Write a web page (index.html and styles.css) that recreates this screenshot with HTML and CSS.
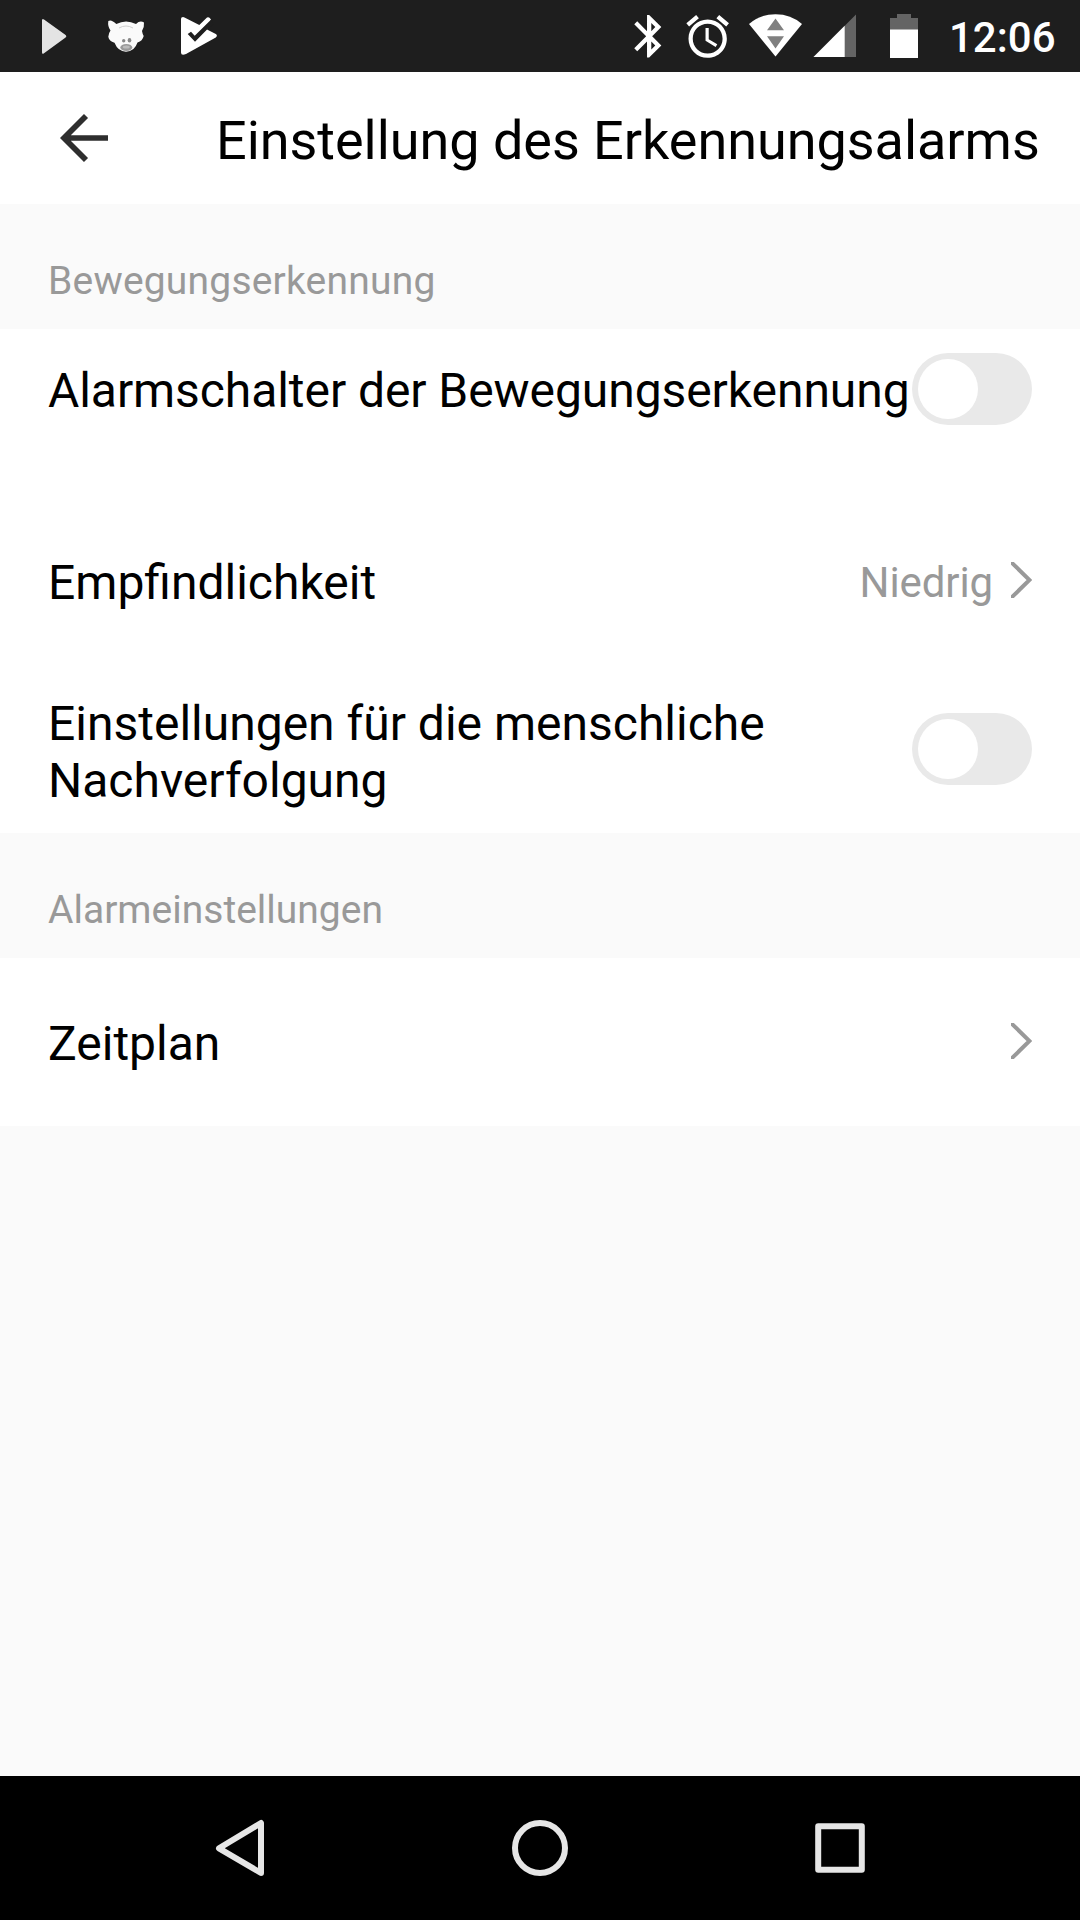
FILE: index.html
```html
<!DOCTYPE html>
<html lang="de">
    <head>
    <meta charset="UTF-8">
    <title>Einstellung des Erkennungsalarms</title>
        <link rel="stylesheet" href="styles.css">
    </head>
        <body>
            <div class="status">
                <div class="status_left">
                    <svg width="48" height="72" viewBox="0 0 48 72">
                        <path d="M12 20.5q0-2.5 2-1L35.6 35q1.6 1.3 0 2.600L14 53.300q-2 1.500-2-1z" fill="#e4e4e4"/>
                    </svg>
                    <svg width="48" height="72" viewBox="0 0 48 72">
                        <path d="M6.300 21q3-2 8 3 9.700-5 19.700 0 4-4 8-1.500.5 4-2 8.500.5 3 1.700 5-1.200 5-6.200 6.500-3 9-11.500 9.200-8-.2-11.500-9-5.500-1.700-6.200-6 .5-4 2.200-6.200-3-4-2.200-9.500z" fill="#fafafa"/>
                        <path d="M17 28q7-4 14 0" fill="none" stroke="#cfcfcf"/>
                        <ellipse cx="24.300" cy="47.500" rx="6" ry="3.500" fill="#999"/>
                        <ellipse cx="24.300" cy="47" rx="3.500" ry="1.500" fill="#bbb"/>
                        <circle cx="21.700" cy="40.700" r="1.700" fill="#888"/>
                        <ellipse cx="27.500" cy="40.200" rx="1.800" ry="2.300" fill="#888"/>
                    </svg>
                    <svg width="48" height="72" viewBox="0 0 48 72">
                        <path d="M7 19q0-2 2-2 .8 0 1.500.4L25.300 25l7.700-7.400q1.300-1 2.500.2l1.500 1.700-4 10 8.800 4.500q2.200 1.700 0 3.400L12 54q-5 2-5-1.500z" fill="#fff"/>
                        <path d="M13.700 34l3.300-2.300 3.700 4L37.700 19l2 5-6.400 5.200L21 41.700z" fill="#1e1e1e"/>
                    </svg>
                </div>
                <div class="status_right">
                    <svg width="60" height="72" viewBox="0 0 60 72">
                        <path transform="translate(-.4 10.700) scale(2.130)" fill="#fff" d="M17.710 7.710L12 2h-1v7.590L6.410 5 5 6.410 10.590 12 5 17.590 6.410 19 11 14.410V22h1l5.710-5.710-4.300-4.290 4.300-4.290zM13 5.830l1.880 1.880L13 9.590V5.830zm1.880 10.460L13 18.170v-3.760l1.880 1.880z"/>
                    </svg>
                    <svg width="60" height="72" viewBox="0 0 60 72">
                        <path transform="translate(-1.900 11) scale(2.130)" fill="#fff" d="M22 5.720l-4.600-3.860-1.290 1.530 4.600 3.860L22 5.720zM7.880 3.390L6.600 1.860 2 5.710l1.290 1.530 4.590-3.850zM12.500 8H11v6l4.750 2.850.75-1.230-4-2.370V8zM12 4c-4.970 0-9 4.030-9 9s4.020 9 9 9c4.970 0 9-4.030 9-9s-4.030-9-9-9zm0 16c-3.870 0-7-3.130-7-7s3.130-7 7-7 7 3.130 7 7-3.130 7-7 7z"/>
                    </svg>
                    <svg width="64" height="72" viewBox="0 0 64 72">
                        <path d="M5 24Q16 14.200 31.500 14.200T58 24L31.500 56.500z" fill="#fff"/>
                        <path d="M31.500 18.500L40 30.200H23zM23 36.300h17L31.500 48.500z" fill="#808080"/>
                    </svg>
                    <svg width="60" height="72" viewBox="0 0 60 72">
                        <path d="M5.500 57L48 14.500V57z" fill="#646464"/>
                        <path d="M5.500 57L36.700 25.800V57z" fill="#fff"/>
                    </svg>
                    <svg width="68" height="72" viewBox="0 0 68 72">
                        <path d="M22 18h7v-4h14v4h7v12H22z" fill="#646464"/>
                        <path d="M22 29.500h28V58H22z" fill="#fff"/>
                    </svg>
                    <span class="clock">12:06</span>
                </div>
            </div>

            <div class="header">
                <svg class="back" width="48" height="48" viewBox="0 0 48 48">
                    <path d="M48 24H5M26 2L4 24l22 22" fill="none" stroke="#2e2e2e" stroke-width="5.700"/>
                </svg>
                <h1 class="title">Einstellung des Erkennungsalarms</h1>
            </div>

            <div class="content">
                <h2 class="section section_motion">Bewegungserkennung</h2>
                <div class="row row_top">
                    <span class="label">Alarmschalter der Bewegungserkennung</span>
                    <div class="switch"></div>
                </div>
                <div class="row">
                    <span class="label">Empfindlichkeit</span>
                    <span class="value">Niedrig</span>
                    <svg class="chevron" width="21" height="36" viewBox="0 0 21 36">
                        <path d="M0 0l18.500 18L0 36" fill="none" stroke="#999" stroke-width="4"/>
                    </svg>
                </div>
                <div class="row">
                    <span class="label label_long">Einstellungen für die menschliche Nachverfolgung</span>
                    <div class="switch"></div>
                </div>
                <h2 class="section">Alarmeinstellungen</h2>
                <div class="row">
                    <span class="label">Zeitplan</span>
                    <svg class="chevron" width="21" height="36" viewBox="0 0 21 36">
                        <path d="M0 0l18.500 18L0 36" fill="none" stroke="#999" stroke-width="4"/>
                    </svg>
                </div>
            </div>

            <div class="nav">
                <svg width="60" height="60" viewBox="0 0 60 60">
                    <path d="M51 5v50L9 30.300z" fill="none" stroke="#e6e6e6" stroke-width="6" stroke-linejoin="round"/>
                </svg>
                <svg width="60" height="60" viewBox="0 0 60 60">
                    <circle cx="30" cy="30" r="25" fill="none" stroke="#e6e6e6" stroke-width="6"/>
                </svg>
                <svg width="60" height="60" viewBox="0 0 60 60">
                    <path d="M8.200 8.200h43.600v43.600H8.200z" fill="none" stroke="#e6e6e6" stroke-width="6" stroke-linejoin="round"/>
                </svg>
            </div>
        </body>
</html>
```
FILE: styles.css
```css
* {
    box-sizing: border-box;
}
body {
    margin: 0;
    height: 1920px;
    display: flex;
    flex-direction: column;
    font-family: Roboto, "Liberation Sans", sans-serif;
    color: #000;
    background-color: #fafafa;
}
svg {
    display: block;
    flex-shrink: 0;
}

/*  STATUS BAR  */
.status {
    display: flex;
    justify-content: space-between;
    height: 72px;
    padding-left: 30px;
    padding-right: 24px;
    background-color: #1e1e1e;
}
.status_left {
    display: flex;
    gap: 24px;
}
.status_right {
    display: flex;
    width: 432px;
}
.clock {
    padding-left: 13px;
    font-size: 42px;
    font-weight: 500;
    line-height: 76px;
    color: #fff;
}

/*  HEADER  */
.header {
    display: flex;
    align-items: center;
    height: 132px;
    padding-left: 60px;
    background-color: #fff;
}
.title {
    margin: 0 0 0 108px;
    padding-top: 5px;
    font-size: 54px;
    font-weight: 400;
    line-height: 64px;
    letter-spacing: -0.04px;
    white-space: nowrap;
}

/*  SETTINGS  */
.content {
    flex: 1;
}
.section {
    height: 125px;
    margin: 0;
    padding: 54px 48px 0;
    font-size: 39px;
    font-weight: 400;
    line-height: 46px;
    color: #999;
}
.section_motion {
    letter-spacing: 0.2px;
}
.row {
    display: flex;
    align-items: center;
    height: 168px;
    padding: 0 48px;
    background-color: #fff;
}
.row_top {
    align-items: flex-start;
    padding-top: 24px;
}
.row_top .label {
    padding-top: 1px;
    line-height: 74px;
    letter-spacing: -0.07px;
    white-space: nowrap;
}
.label {
    flex: 1;
    padding-top: 2px;
    font-size: 48px;
    line-height: 57px;
}
.label_long {
    padding-top: 6px;
}
.value {
    padding-top: 4px;
    font-size: 42px;
    line-height: 50px;
    letter-spacing: -0.1px;
    color: #999;
}
.chevron {
    margin-left: 18px;
    margin-bottom: 2px;
}
.switch {
    flex-shrink: 0;
    width: 120px;
    height: 72px;
    padding: 6px;
    border-radius: 36px;
    background-color: #e9e9e9;
}
.switch::before {
    content: "";
    display: block;
    width: 60px;
    height: 60px;
    border-radius: 50%;
    background-color: #fff;
}

/*  NAVIGATION BAR  */
.nav {
    display: flex;
    justify-content: center;
    align-items: center;
    gap: 240px;
    height: 144px;
    background-color: #000;
}
```
